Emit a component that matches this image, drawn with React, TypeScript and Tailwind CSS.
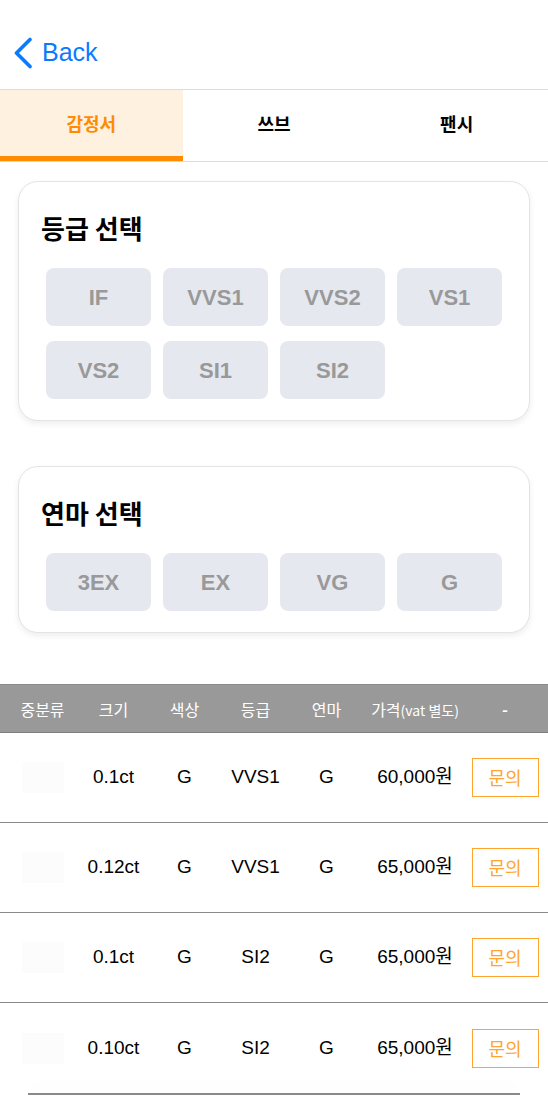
import { useState } from "react";

const grades = ["IF", "VVS1", "VVS2", "VS1", "VS2", "SI1", "SI2"];
const cuts = ["3EX", "EX", "VG", "G"];
const tabs = ["감정서", "쓰브", "팬시"];

const rows = [
  { size: "0.1ct", color: "G", grade: "VVS1", cut: "G", price: "60,000원" },
  { size: "0.12ct", color: "G", grade: "VVS1", cut: "G", price: "65,000원" },
  { size: "0.1ct", color: "G", grade: "SI2", cut: "G", price: "65,000원" },
  { size: "0.10ct", color: "G", grade: "SI2", cut: "G", price: "65,000원" },
];

const kr = "font-['Noto_Sans_CJK_KR',sans-serif]";
const latin = "font-['Liberation_Sans','Noto_Sans_CJK_KR',sans-serif]";
const cols = "grid grid-cols-[71px_71px_71px_71px_71px_106px_74px] pl-[7px]";

function OptionCard({ title, items }: { title: string; items: string[] }) {
  return (
    <div className="mx-[18px] rounded-[20px] border border-[#e4e4e4] bg-white px-[22px] pt-[28px] pb-[21px] shadow-[0_3px_6px_rgba(0,0,0,0.07)]">
      <h2 className={`${kr} text-[26px] leading-[36px] font-bold text-black mb-[22px]`}>
        {title}
      </h2>
      <div className="grid grid-cols-4 gap-x-[12px] gap-y-[15px] px-[5px]">
        {items.map((g) => (
          <button
            key={g}
            className={`${latin} h-[58px] rounded-[8px] bg-[#e6e8f0] text-[22px] font-bold text-[#999]`}
          >
            {g}
          </button>
        ))}
      </div>
    </div>
  );
}

export default function App() {
  const [tab, setTab] = useState(0);

  return (
    <div className="min-h-[1100px] w-[548px] bg-white overflow-hidden">
      {/* header */}
      <div className="h-[89px] flex items-center pl-[13px] pt-[16px]">
        <button className="flex items-center gap-[9px] text-[#0a7aff]">
          <svg width="20" height="32" viewBox="0 0 20 32" fill="none">
            <path
              d="M17 2.5 L3.5 16 L17 29.5"
              stroke="currentColor"
              strokeWidth="3.6"
              strokeLinecap="round"
              strokeLinejoin="round"
            />
          </svg>
          <span className={`${latin} text-[25px] leading-none`}>Back</span>
        </button>
      </div>

      {/* tabs */}
      <div className="grid grid-cols-3 border-y border-[#dcdcdc]">
        {tabs.map((t, i) => (
          <button
            key={t}
            onClick={() => setTab(i)}
            className={`${kr} h-[71px] pt-[1px] text-[18px] font-bold border-b-[5px] ${
              tab === i
                ? "bg-[#fff1e0] text-[#ff8c00] border-[#ff8c00]"
                : "bg-white text-black border-transparent"
            }`}
          >
            {t}
          </button>
        ))}
      </div>

      <div className="pt-[19px] flex flex-col gap-[45px]">
        <OptionCard title="등급 선택" items={grades} />
        <OptionCard title="연마 선택" items={cuts} />
      </div>

      {/* table */}
      <div className="mt-[51px]">
        <div
          className={`${cols} ${kr} h-[49px] items-center bg-[#999] border-t border-[#8a8a8a] border-b border-b-[#7d7d7d] text-white text-[16px] text-center`}
        >
          <span>중분류</span>
          <span>크기</span>
          <span>색상</span>
          <span>등급</span>
          <span>연마</span>
          <span className="whitespace-nowrap">
            가격<span className="text-[14px]">(vat 별도)</span>
          </span>
          <span className="font-bold">-</span>
        </div>

        {rows.map((r, i) => (
          <div
            key={i}
            className={`${cols} ${latin} h-[90px] items-center text-center text-[19px] text-black ${
              i < rows.length - 1 ? "border-b-[1.5px] border-[#8a8a8a]" : ""
            }`}
          >
            <div className="flex justify-center">
              <div className="w-[42px] h-[31px] bg-[#fcfcfc]" />
            </div>
            <span>{r.size}</span>
            <span>{r.color}</span>
            <span>{r.grade}</span>
            <span>{r.cut}</span>
            <span>{r.price}</span>
            <div className="flex justify-center">
              <button
                className={`${kr} w-[67px] h-[39px] border-[1.5px] border-[#ffa52e] text-[#ffa52e] text-[18px]`}
              >
                문의
              </button>
            </div>
          </div>
        ))}
        <div className="mx-[28px] h-[2px] bg-[#8a8a8a] shadow-[0_-6px_14px_rgba(0,0,0,0.05)]" />
      </div>
    </div>
  );
}
